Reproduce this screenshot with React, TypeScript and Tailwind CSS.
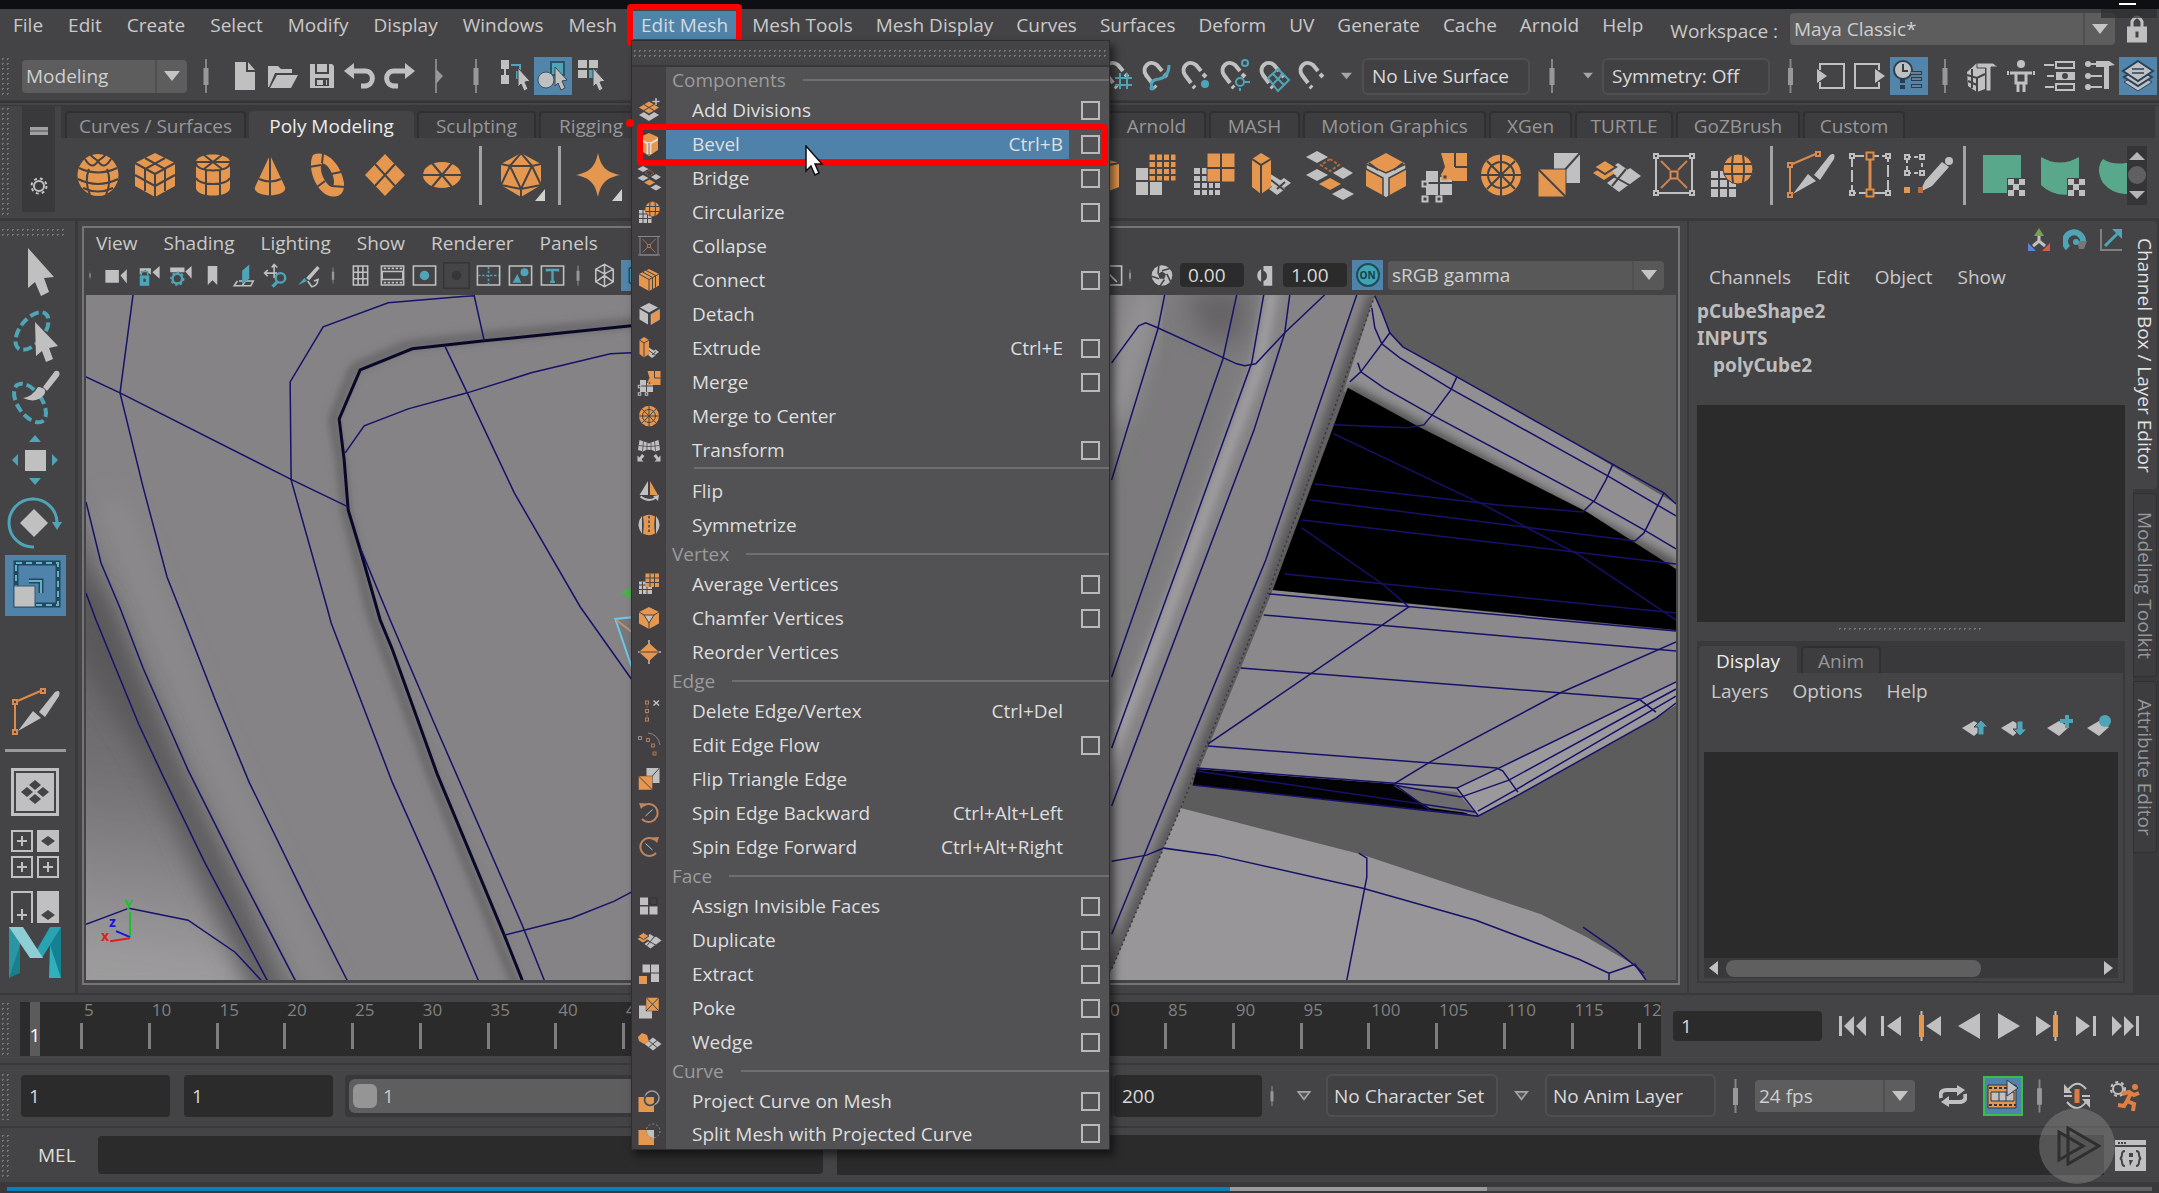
import React from "react";

const OR = "#e5974f";
const GR = "#c1c0c1";
const TE = "#4fa5b7";
const DK = "#444346";

type IconFn = () => React.ReactNode;

const dia = (cx: number, cy: number, w: number, h: number, fill: string, key?: string) => (
  <path key={key} d={`M${cx} ${cy - h}L${cx + w} ${cy}L${cx} ${cy + h}L${cx - w} ${cy}Z`} fill={fill} />
);
const dot = (x: number, y: number, c: string, s = 4) => (
  <rect x={x - s / 2} y={y - s / 2} width={s} height={s} fill={DK} stroke={c} strokeWidth="2" />
);

/* Poly modelling icons, drawn on a 44 x 44 grid */
const shapes: Record<string, IconFn> = {
  sphere: () => (
    <>
      <ellipse cx="22" cy="22" rx="20.500" ry="21" fill={OR} />
      <g fill="none" stroke={DK} strokeWidth="2">
        <path d="M3 15Q22 24 41 15M2 26Q22 36 42 26M7 35Q22 42 37 35" />
        <path d="M13 16Q8 28 14 42M31 16Q36 28 30 42M9 6Q16 18 22 8Q28 18 35 6M22 8Q16 4 14 1M22 8Q28 4 30 1" />
      </g>
    </>
  ),
  cube: () => (
    <>
      <path d="M22 0L42 10V33L22 44L2 33V10Z" fill={OR} />
      <path d="M2 10L22 21L42 10M22 21V44M12 5L32 16V38M32 5L12 16V38M2 22L22 33L42 22" fill="none" stroke={DK} strokeWidth="2" />
    </>
  ),
  cylinder: () => (
    <>
      <path d="M5 9C5 -1 39 -1 39 9V35C39 45 5 45 5 35Z" fill={OR} />
      <path d="M5 10C5 20 39 20 39 10M15 16V43M29 16V43M5 25C9 33 35 33 39 25M5 9H39M13 2L31 16M31 2L13 16" fill="none" stroke={DK} strokeWidth="2" />
    </>
  ),
  cone: () => (
    <>
      <path d="M22 2L37 34C40 45 4 45 7 34Z" fill={OR} />
      <path d="M22 2V43M11 26Q22 31 33 26" fill="none" stroke={DK} strokeWidth="2" />
    </>
  ),
  torus: () => (
    <>
      <path fillRule="evenodd" d="M8 2C20 -4 36 10 39 30C40 42 32 46 22 42C10 36 2 14 8 2ZM17 10C13 16 20 32 27 34C33 30 25 11 17 10Z" fill={OR} />
      <path d="M4 14L16 12M18 1L17 10M36 19L26 21M40 34L27 33M12 34L20 28" stroke={DK} strokeWidth="2" />
    </>
  ),
  plane: () => (
    <>
      {dia(22, 22, 20, 21, OR)}
      <path d="M12 11L32 33M32 11L12 33" stroke={DK} strokeWidth="2" />
    </>
  ),
  disc: () => (
    <>
      <ellipse cx="22" cy="22" rx="19" ry="13" fill={OR} />
      <path d="M3 22H41M12 10L32 34M32 10L12 34" stroke={DK} strokeWidth="2" />
    </>
  ),
  platonic: () => (
    <>
      <path d="M22 0L42 11V32L22 44L2 32V11Z" fill={OR} />
      <path d="M2 11L11 13L22 0L33 13L42 11M11 13H33L22 36L11 13L2 32L22 36L42 32L33 13M22 36V44" fill="none" stroke={DK} strokeWidth="2" />
    </>
  ),
  star: () => <path d="M22 0C25 14 30 19 44 22C30 25 25 30 22 44C19 30 14 25 0 22C14 19 19 14 22 0Z" fill={OR} />,
  halfcube: () => (
    <>
      <path d="M22 4L42 10V34L22 42Z" fill={OR} />
      <path d="M22 14L42 10M32 12V38" stroke={DK} strokeWidth="2" />
    </>
  ),
  smooth: () => (
    <>
      <path d="M2 15H28V42H2Z" fill={GR} />
      <path d="M2 28H28M15 15V42" stroke={DK} strokeWidth="2" />
      <path d="M15 1H42V28H15Z" fill={OR} stroke={DK} />
      <path d="M22 1V28M29 1V28M36 1V28M15 8H42M15 15H42M15 22H42" stroke={DK} strokeWidth="2" />
    </>
  ),
  reduce: () => (
    <>
      <path d="M2 15H28V42H2Z" fill={GR} />
      <path d="M9 15V42M16 15V42M22 15V42M2 22H28M2 29H28M2 36H28" stroke={DK} strokeWidth="2" />
      <path d="M15 0H43V29H15Z" fill={OR} stroke={DK} />
      <path d="M29 0V29M15 15H43" stroke={DK} strokeWidth="2" />
    </>
  ),
  extrude: () => (
    <>
      {dia(28, 36, 8, 6, GR)}
      {dia(35, 30, 7, 5, GR)}
      <path d="M20 20L36 30L26 36L18 30Z" fill={GR} />
      <path d="M22 27L35 37M28 36L36 29" stroke={DK} strokeWidth="2" />
      <path d="M12 0L22 6V34L12 41L3 34V6Z" fill={OR} />
      <path d="M3 6L12 12L22 6M12 12V41" fill="none" stroke={DK} strokeWidth="2" />
    </>
  ),
  bridge: () => (
    <>
      {dia(10, 4, 11, 6, GR)}
      {dia(10, 22, 11, 6, GR)}
      {dia(36, 20, 10, 6, GR)}
      {dia(23, 31, 11, 6, OR)}
      {dia(36, 41, 11, 6, GR)}
      <path d="M23 6L32 12L23 18L14 12Z" fill="none" stroke="#b5683f" strokeWidth="2" strokeDasharray="3 2" />
    </>
  ),
  bevel: () => (
    <>
      <path d="M22 0L42 11V33L22 44L2 33V11Z" fill={OR} />
      <path d="M2 11L22 20L42 11L42 16L25 25V43L22 45L19 43V25L2 16Z" fill={GR} stroke={DK} strokeWidth="1.500" />
      <path d="M5 10L14 17M39 10L30 17" stroke={DK} strokeWidth="2" />
    </>
  ),
  bevelEdge: () => (
    <>
      <path d="M22 0L40 8V34L22 46L4 34V8Z" fill={OR} />
      <path d="M4 10L18 18H26L40 10V15L27 22V42H17V22L4 15Z" fill="#e6d8cc" />
      <path d="M22 20V45" stroke="#8a7566" strokeWidth="2" />
    </>
  ),
  merge: () => (
    <>
      <path d="M4 18H18V24H30V42H4Z" fill={GR} />
      <path d="M17 18V42M4 30H30" stroke={DK} strokeWidth="2" />
      <path d="M19 0H45V28H31L19 22L23 14Z" fill={OR} />
      <path d="M33 0V14M33 14H45" stroke={DK} strokeWidth="2" />
      {dot(23, 24, OR, 5)}
      {dot(3, 31, GR, 5)}
      {dot(3, 46, GR, 5)}
      {dot(17, 46, GR, 5)}
    </>
  ),
  target: () => (
    <>
      <ellipse cx="22" cy="22" rx="20" ry="20.500" fill={OR} />
      <ellipse cx="22" cy="22" rx="13" ry="13" fill="none" stroke={DK} strokeWidth="2" />
      <path d="M22 1V43M2 22H42M8 8L36 36M36 8L8 36" stroke={DK} strokeWidth="2" />
    </>
  ),
  flipTri: () => (
    <>
      <path d="M17 0H43V30H17Z" fill={GR} />
      <path d="M43 0L17 29" stroke={DK} strokeWidth="2" />
      <path d="M1 16H29V44H1Z" fill={OR} stroke={DK} />
      <path d="M1 16L29 44" stroke={DK} strokeWidth="2" />
    </>
  ),
  duplicate: () => (
    <>
      {dia(25, 30, 12, 9, GR)}
      {dia(36, 23, 11, 8, GR)}
      {dia(24, 17, 10, 7, GR)}
      <path d="M19 23L37 33M32 16L18 33" stroke={DK} strokeWidth="2" />
      {dia(10, 20, 11, 7, OR)}
      <path d="M0 14L11 7L22 14L11 21Z" fill={OR} stroke={DK} strokeWidth="2" />
    </>
  ),
  collapse: () => (
    <>
      <path d="M4 3H40V40H4Z" fill="none" stroke={GR} strokeWidth="2" />
      <path d="M9 8L18 17M35 8L26 17M9 35L18 26M35 35L26 26" stroke="#c98350" strokeWidth="2" />
      {dot(22, 22, "#d98a4c", 7)}
      {dot(4, 3, GR)}
      {dot(40, 3, GR)}
      {dot(4, 40, GR)}
      {dot(40, 40, GR)}
    </>
  ),
  collapseDim: () => (
    <>
      <path d="M4 3H40V40H4Z" fill="none" stroke="#858486" strokeWidth="2" />
      <path d="M9 8L35 35M35 8L9 35" stroke="#9a7460" strokeWidth="2" />
      <path d="M0 3H44M0 40H44" stroke="#858486" strokeWidth="2" />
      {dot(22, 22, "#a97252", 6)}
    </>
  ),
  circularize: () => (
    <>
      <path d="M2 18H27V44H2Z" fill={GR} />
      <path d="M10 18V44M19 18V44M2 26H27M2 35H27" stroke={DK} strokeWidth="2" />
      <circle cx="29" cy="16" r="15" fill={OR} stroke={DK} />
      <path d="M24 2Q22 16 24 30M34 2Q36 16 34 30M15 11H43M15 21H43" fill="none" stroke={DK} strokeWidth="2" />
    </>
  ),
  knife: () => (
    <>
      <path d="M0 13V42M0 12L28 0" stroke="#d98a4c" strokeWidth="2" />
      <path d="M3 41L18 21L26 28Z" fill={GR} />
      <path d="M24 22L40 2Q46 -1 44 6L30 27Z" fill={GR} />
      {dot(0, 12, "#d98a4c")}
      {dot(28, 1, "#d98a4c")}
      {dot(0, 42, "#d98a4c")}
    </>
  ),
  loop: () => (
    <>
      <path d="M4 3H40V40H4Z" fill="none" stroke={GR} strokeWidth="2" strokeDasharray="12 3" />
      <path d="M22 3V40" stroke="#d98a4c" strokeWidth="3" />
      {dot(22, 3, "#e0893f", 7)}
      {dot(22, 40, "#e0893f", 7)}
      {dot(4, 3, GR)}
      {dot(40, 3, GR)}
      {dot(4, 40, GR)}
      {dot(40, 40, GR)}
    </>
  ),
  quad: () => (
    <>
      <path d="M1 4H16V20H1Z" fill="none" stroke={GR} strokeWidth="2" strokeDasharray="4 3" />
      {dot(1, 4, GR)}
      {dot(16, 4, GR)}
      {dot(1, 20, GR)}
      {dot(16, 20, GR)}
      <path d="M-2 34H4V40H-2Z" fill={OR} />
      <path d="M14 39L19 28L36 9L43 14L26 33Z" fill={GR} />
      <circle cx="43" cy="8" r="4" fill={GR} />
      <path d="M12 34H17V40H12Z" fill="#b76d3c" />
    </>
  ),
  uvFlat: () => (
    <>
      <path d="M-2 2H36V40H-2Z" fill="#5aa88c" />
      <Checker x={22} y={25} />
    </>
  ),
  uvCyl: () => (
    <>
      <path d="M-2 4Q17 15 36 4V40Q12 46 -2 32Z" fill="#5aa88c" />
      <Checker x={24} y={25} />
    </>
  ),
  uvSph: () => <path d="M2 6Q14 14 32 8V40Q14 44 2 30Q-6 16 2 6Z" fill="#5aa88c" />,
  divisions: () => (
    <>
      {dia(22, 32, 20, 12, GR)}
      {dia(22, 18, 23, 15, DK)}
      {dia(22, 17, 20, 12, OR)}
      <path d="M12 11L32 23M32 11L12 23" stroke={DK} strokeWidth="2" />
      <path d="M36 -2V12M29 5H43" stroke={GR} strokeWidth="3" />
    </>
  ),
  connect: () => (
    <>
      <path d="M22 0L42 10V33L22 44L2 33V10Z" fill={OR} />
      <path d="M2 10L22 21L42 10M22 21V44M9 6L29 17V40M16 3L35 13V37" fill="none" stroke={DK} strokeWidth="2" />
    </>
  ),
  detach: () => (
    <>
      <path d="M22 0L40 9L22 19L4 9Z" fill={GR} />
      <path d="M3 12L20 22V43L3 33Z" fill={GR} />
      <path d="M26 23L43 13V33L26 43Z" fill={OR} stroke={GR} />
    </>
  ),
  transform: () => (
    <>
      <path d="M3 2L18 7L22 9L26 7L41 2L44 22L34 25L26 21L22 22L18 21L10 25L0 22Z" fill={GR} />
      <path d="M11 4L9 24M33 4L35 24M18 7V21M26 7V21M2 13L18 15H26L42 13" fill="none" stroke={DK} strokeWidth="1.500" />
      <path d="M-1 45V33L3 37L8 30L13 34L7 41L11 45ZM45 45V33L41 37L36 30L31 34L37 41L33 45Z" fill={GR} />
    </>
  ),
  flip: () => (
    <>
      <path d="M20 2V30H3Z" fill={GR} />
      <path d="M24 2V30H40Z" fill={OR} />
      <path d="M5 33Q22 46 36 35" fill="none" stroke={GR} strokeWidth="4" />
      <path d="M30 32L42 30L40 42Z" fill={GR} />
    </>
  ),
  symmetrize: () => (
    <>
      <path d="M8 4Q-6 20 8 40ZM36 4Q50 20 36 40Z" fill={GR} />
      <path d="M10 5Q22 -2 34 5Q31 20 34 39Q22 46 10 39Q13 20 10 5Z" fill={OR} />
      <path d="M22 4V40" stroke={DK} strokeWidth="3" strokeDasharray="5 4" />
    </>
  ),
  average: () => (
    <>
      <path d="M2 17H28V42H2Z" fill={GR} />
      <path d="M9 17V42M18 17V42M2 24H28M2 33H28" stroke={DK} strokeWidth="2" />
      <path d="M15 1H42V28H15Z" fill={OR} />
      <path d="M24 1V28M33 1V28M15 10H42M15 19H42" stroke={DK} strokeWidth="2" />
    </>
  ),
  chamfer: () => (
    <>
      <path d="M22 0L42 10V33L22 44L2 33V10Z" fill={OR} />
      <path d="M12 16H32L22 32Z" fill={GR} stroke={DK} strokeWidth="2" />
      <path d="M2 10L12 16M42 10L32 16M22 32V44" stroke={DK} strokeWidth="2" />
    </>
  ),
  reorder: () => (
    <>
      <path d="M22 -2V46M0 22H46" stroke={GR} strokeWidth="3" />
      {dia(22, 22, 20, 18, OR)}
      <path d="M2 22H42" stroke={DK} strokeWidth="2" />
    </>
  ),
  deleteEdge: () => (
    <>
      <path d="M18 6V38" stroke="#a9714e" strokeWidth="2" strokeDasharray="3 3" />
      {dot(18, 5, "#b78160", 6)}
      {dot(18, 22, "#b78160", 6)}
      {dot(18, 39, "#b78160", 6)}
      <path d="M31 1L42 11M42 1L31 11" stroke={GR} strokeWidth="3" />
    </>
  ),
  edgeFlow: () => (
    <>
      <path d="M20 -2Q40 0 44 22" fill="none" stroke="#858486" strokeWidth="2" />
      {dot(4, 8, "#8d8d8d", 6)}
      {dot(20, 12, "#b07a56", 6)}
      {dot(30, 23, "#b07a56", 6)}
      {dot(33, 39, "#b07a56", 6)}
    </>
  ),
  spinBack: () => (
    <>
      <path d="M10 8A18 18 0 1 1 8 34" fill="none" stroke="#c08560" strokeWidth="4" />
      <path d="M2 2L16 3L6 14Z" fill="#c08560" />
      <path d="M15 28L29 15" stroke={GR} strokeWidth="2" />
    </>
  ),
  spinFwd: () => (
    <>
      <path d="M34 8A18 18 0 1 0 36 34" fill="none" stroke="#c08560" strokeWidth="4" />
      <path d="M42 2L28 3L38 14Z" fill="#c08560" />
      <path d="M29 28L15 15" stroke={GR} strokeWidth="2" />
    </>
  ),
  invisible: () => (
    <>
      <path d="M4 5H20V20H4ZM4 23H20V39H4ZM23 23H39V39H23Z" fill={GR} />
      <path d="M24 6H38V19H24Z" fill="none" stroke="#333" strokeWidth="2" />
    </>
  ),
  extract: () => (
    <>
      <path d="M9 3H24V19H9ZM26 3H42V19H26ZM26 21H42V38H26Z" fill={GR} />
      <path d="M2 26H18V42H2Z" fill={OR} />
    </>
  ),
  poke: () => (
    <>
      <path d="M2 17H28V43H2Z" fill={GR} />
      <path d="M16 1H42V28H16Z" fill={OR} stroke={DK} />
      <path d="M16 1L42 28M42 1L16 28" stroke={DK} strokeWidth="2" />
    </>
  ),
  wedge: () => (
    <>
      {dia(30, 26, 17, 13, GR)}
      <path d="M21 19L38 33M38 19L21 33" stroke={DK} strokeWidth="2" />
      <path d="M0 12L8 4L18 8L22 22L12 26L2 20Z" fill={OR} />
    </>
  ),
  project: () => (
    <>
      <path d="M1 14H32V44H1Z" fill={OR} />
      <circle cx="28" cy="16" r="14" fill="none" stroke="#9d9c9e" strokeWidth="3" />
      <circle cx="24" cy="20" r="11" fill="none" stroke={DK} strokeWidth="3" />
    </>
  ),
  splitMesh: () => (
    <>
      <path d="M1 14H32V44H1Z" fill={OR} />
      <path d="M18 14H32V30Q18 28 18 14Z" fill={GR} />
      <circle cx="30" cy="16" r="14" fill="none" stroke="#8d8c8e" strokeWidth="2" strokeDasharray="4 4" />
    </>
  ),
};

function Checker({ x, y }: { x: number; y: number }) {
  return (
    <g>
      <rect x={x} y={y} width="18" height="18" fill={DK} />
      <path
        d={`M${x + 1} ${y + 1}h6v6h-6zM${x + 12} ${y + 1}h6v6h-6zM${x + 6} ${y + 6}h6v6h-6zM${x + 1} ${y + 12}h6v6h-6zM${x + 12} ${y + 12}h6v6h-6z`}
        fill={GR}
      />
    </g>
  );
}

function Shape({ name, className = "size-11" }: { name: string; className?: string }) {
  return (
    <svg viewBox="0 0 44 44" className={`${className} overflow-visible shrink-0`} aria-hidden="true">
      {shapes[name]()}
    </svg>
  );
}

/* Toolbar icons, drawn on a 34 x 34 grid */
const magnet = (
  <>
    <path d="M13 24L7 16C2 8 11 0 18 6L23 12" fill="none" stroke={GR} strokeWidth="4" />
    <path d="M15 27L17 29M25 15L28 18" stroke={GR} strokeWidth="4" />
  </>
);
const frame = <path d="M3 5H31V29H3Z" fill="none" stroke={GR} strokeWidth="2" />;
const cursor = (x: number, y: number) => (
  <path d={`M${x} ${y}l12 13l-5 1l3 7l-4 2l-3 -7l-3 3z`} fill={GR} stroke={DK} strokeWidth="1" />
);
const tools: Record<string, IconFn> = {
  sep: () => (
    <>
      <path d="M17 0V34" stroke="#858586" strokeWidth="2" />
      <path d="M17 9V26" stroke="#98989a" strokeWidth="5" />
    </>
  ),
  playSep: () => (
    <>
      <path d="M15 0V34" stroke="#858586" strokeWidth="2" />
      <path d="M15 10L22 17L15 25Z" fill="#98989a" />
    </>
  ),
  file: () => <path d="M7 3H18V13H27V31H7ZM20 3L27 11H20Z" fill={GR} />,
  open: () => (
    <>
      <path d="M2 28V7H12L15 10H26V14H9L3 28Z" fill={GR} />
      <path d="M11 16H32L25 29H4Z" fill={GR} />
    </>
  ),
  save: () => (
    <>
      <path d="M5 5H27L29 7V29H5Z" fill={GR} />
      <path d="M10 5H24V15H10Z" fill={DK} />
      <path d="M12 5H22V13H12ZM10 20H24V29H10Z" fill={GR} />
      <path d="M10 19H24V27H10Z" fill={DK} />
      <path d="M12 21H22V26H12Z" fill={GR} />
      <path d="M18 21H21V26H18Z" fill={DK} />
    </>
  ),
  undo: () => (
    <>
      <path d="M7 12H22C32 12 32 27 21 27H18" fill="none" stroke={GR} strokeWidth="5" />
      <path d="M1 12L11 4V20Z" fill={GR} />
    </>
  ),
  redo: () => (
    <>
      <path d="M27 12H12C2 12 2 27 13 27H16" fill="none" stroke={GR} strokeWidth="5" />
      <path d="M33 12L23 4V20Z" fill={GR} />
    </>
  ),
  selHier: () => (
    <>
      <path d="M3 1H11V10H3ZM3 16H11V25H3Z" fill={GR} />
      <path d="M7 10V16" stroke={GR} strokeWidth="2" />
      <path d="M13 6H22V14" fill="none" stroke={TE} strokeWidth="2" />
      <path d="M18 12H24V20H18Z" fill={TE} />
      {cursor(20, 9)}
    </>
  ),
  selObj: () => (
    <>
      <path d="M15 3H28V16H15Z" fill={TE} stroke="#27566a" strokeWidth="2" />
      <circle cx="10" cy="21" r="8" fill={GR} stroke="#2f5470" />
      {cursor(19, 8)}
    </>
  ),
  selComp: () => (
    <>
      <path d="M3 1H12V9H3ZM14 1H23V9H14ZM3 11H12V19H3Z" fill={GR} />
      <path d="M14 11H22V19H14Z" fill={TE} />
      {cursor(18, 9)}
    </>
  ),
  magGrid: () => (
    <>
      {magnet}
      <path d="M20 14V30M27 14V30M15 19H32M15 26H32" stroke={TE} strokeWidth="2" />
    </>
  ),
  magCurve: () => (
    <>
      {magnet}
      <path d="M13 29Q10 21 20 20Q30 18 30 6" fill="none" stroke={TE} strokeWidth="3" />
      <circle cx="13" cy="29" r="2.500" fill={TE} />
    </>
  ),
  magPoint: () => (
    <>
      {magnet}
      <circle cx="27" cy="25" r="4" fill={TE} />
    </>
  ),
  magCenter: () => (
    <>
      {magnet}
      <circle cx="28" cy="4" r="3" fill="none" stroke={TE} strokeWidth="2" />
      <circle cx="23" cy="23" r="4" fill="none" stroke={TE} strokeWidth="2" />
      <path d="M28 23H33M23 29V32" stroke={TE} strokeWidth="2" />
    </>
  ),
  magPlane: () => (
    <>
      {magnet}
      <path d="M12 19L22 10L33 21L22 32ZM17 15L28 26M27 15L17 25" fill="none" stroke={TE} strokeWidth="2" />
    </>
  ),
  magnet: () => magnet,
  inputs: () => (
    <>
      <path d="M6 11V5H30V29H6V23" fill="none" stroke={GR} strokeWidth="2" />
      <path d="M3 10L13 17L3 24Z" fill={GR} />
    </>
  ),
  outputs: () => (
    <>
      <path d="M26 11V5H2V29H26V23" fill="none" stroke={GR} strokeWidth="2" />
      <path d="M22 10L32 17L22 24Z" fill={GR} />
    </>
  ),
  history: () => (
    <>
      <circle cx="11" cy="11" r="9" fill={GR} stroke="#2e3f50" strokeWidth="2" />
      <path d="M11 5V12H16" fill="none" stroke="#2e3f50" strokeWidth="2" />
      <path d="M19 14H30M19 20H30M19 27H30M8 22H13M8 28H13" stroke="#263d52" strokeWidth="4" />
      <path d="M19 14H29M20 20H29M20 27H29" stroke={GR} strokeWidth="1" />
    </>
  ),
  modelKit: () => (
    <>
      <path d="M2 13L12 4H20V30L12 33L3 27Z" fill={GR} />
      <path d="M2 16L12 19L20 15M12 19V33M3 22L12 26M7 10V29" fill="none" stroke={DK} strokeWidth="2" />
      <path d="M12 4H28L33 8H26V32H21V9H12Z" fill={GR} stroke={DK} />
    </>
  ),
  man: () => (
    <>
      <circle cx="17" cy="5" r="4" fill={GR} />
      <path d="M6 14H28M12 14H22V24H12ZM14 24V33M20 24V33" fill="none" stroke={GR} strokeWidth="3" />
      <path d="M3 14H5M29 14H31" stroke={GR} strokeWidth="4" />
    </>
  ),
  attrs: () => (
    <>
      <path d="M1 6H11M4 17H11M2 28H11" stroke={GR} strokeWidth="2" />
      <path d="M13 3H31V9H13ZM13 25H31V31H13Z" fill="none" stroke={GR} strokeWidth="2" />
      <path d="M13 13H32V21H13Z" fill={GR} />
      <circle cx="22" cy="17" r="3" fill={DK} />
    </>
  ),
  toolSet: () => (
    <>
      <circle cx="6" cy="5" r="3" fill={GR} />
      <circle cx="6" cy="17" r="3" fill={GR} />
      <circle cx="6" cy="28" r="3" fill={GR} />
      <path d="M9 5H15M9 17H20M9 28H20" stroke={GR} strokeWidth="2" />
      <path d="M14 2H27L33 6L27 7V30H22V8H14Z" fill={GR} />
    </>
  ),
  layers: () => (
    <>
      <path d="M17 15L31 23L17 32L3 23Z" fill={GR} stroke="#28435b" />
      <path d="M17 10L31 18L17 27L3 18Z" fill={GR} stroke="#28435b" strokeWidth="2" />
      <path d="M17 2L32 12L17 22L2 12Z" fill={GR} stroke="#28435b" strokeWidth="2" />
      <path d="M11 10H23M11 14H23" stroke="#28435b" strokeWidth="1.500" />
    </>
  ),
  camera: () => <path d="M3 10H20V26H3ZM22 17L30 9V27Z" fill={GR} />,
  camLock: () => (
    <>
      <path d="M6 8H20V16L13 10L6 16ZM22 13L31 5V21Z" fill={GR} />
      <path d="M6 17H18V30H6Z" fill={TE} />
      <path d="M8 17V12H16V17" fill="none" stroke={TE} strokeWidth="2" />
      <path d="M12 21V25" stroke={DK} strokeWidth="3" />
    </>
  ),
  camGear: () => (
    <>
      <path d="M4 7H22V13H4ZM23 12L31 5V21Z" fill={GR} />
      <circle cx="13" cy="21" r="6" fill="none" stroke={TE} strokeWidth="3" />
      <circle cx="13" cy="21" r="8" fill="none" stroke={TE} strokeWidth="2" strokeDasharray="3 3" />
    </>
  ),
  bookmark: () => <path d="M11 5H23V29L17 23L11 29Z" fill={GR} />,
  imagePlane: () => (
    <>
      <path d="M10 24H28L25 30H4L8 24M14 30L18 24" fill="none" stroke={GR} strokeWidth="2" />
      <path d="M14 11L23 3V21L14 28Z" fill={TE} />
    </>
  ),
  panZoom: () => (
    <>
      <path d="M3 14H18M14 4V20M11 7L14 3L18 7M6 10L2 14L6 18" fill="none" stroke={GR} strokeWidth="2" />
      <circle cx="22" cy="20" r="6" fill="none" stroke={TE} strokeWidth="3" />
      <path d="M18 25L12 31" stroke={TE} strokeWidth="4" />
    </>
  ),
  grease: () => (
    <>
      <path d="M14 20L28 5L31 8L18 23Z" fill={GR} />
      <path d="M4 29L12 20L15 24Z" fill={TE} />
      <path d="M16 24L21 31Q28 31 29 22L24 24" fill="none" stroke={GR} strokeWidth="2" />
    </>
  ),
  grid: () => <path d="M8 5H26V29H8ZM14 5V29M20 5V29M8 13H26M8 21H26" fill="none" stroke={GR} strokeWidth="2" />,
  film: () => (
    <>
      {frame}
      <path d="M6 8H29M6 26H29" stroke={GR} strokeWidth="2" strokeDasharray="3 2" />
      <path d="M4 12H30V22H4Z" fill="none" stroke={GR} strokeWidth="2" />
    </>
  ),
  gateRes: () => (
    <>
      {frame}
      <circle cx="17" cy="17" r="6" fill={TE} />
    </>
  ),
  gateMask: () => (
    <>
      <path d="M1 1H33V33H1Z" fill="#454547" stroke="#353537" strokeWidth="2" />
      <circle cx="17" cy="17" r="6" fill="#363638" />
    </>
  ),
  chart: () => (
    <>
      {frame}
      <path d="M17 6V28M4 17H30" stroke={TE} strokeWidth="2" strokeDasharray="3 2" />
    </>
  ),
  safe: () => (
    <>
      {frame}
      <circle cx="22" cy="13" r="5" fill={TE} />
      <path d="M7 26L13 15L18 26Z" fill={TE} />
    </>
  ),
  titleSafe: () => (
    <>
      {frame}
      <path d="M10 12V10H24V12M17 10V25M14 25H20" fill="none" stroke={TE} strokeWidth="3" />
    </>
  ),
  wire: () => <path d="M17 3L28 9V25L17 31L6 25V9ZM6 9L17 15L28 9M17 15V31M17 3V15M6 25L17 17L28 25" fill="none" stroke={GR} strokeWidth="2" />,
  shaded: () => <path d="M8 8Q17 2 27 8V26Q17 32 8 26Z" fill={TE} stroke="#1f4a5c" strokeWidth="2" />,
  xray: () => (
    <>
      {frame}
      <path d="M10 10L25 25" stroke={GR} strokeWidth="2" />
    </>
  ),
  aperture: () => (
    <>
      <circle cx="17" cy="17" r="13" fill={GR} />
      <path d="M17 12L22 15L20 21H14L12 15Z" fill={DK} />
      <path d="M17 11L28 8M23 15L28 25M20 22L14 31M13 21L4 18M12 15L13 4" stroke={DK} strokeWidth="2" />
    </>
  ),
  contrast: () => (
    <>
      <path d="M17 5H28V30H17V24A7 7 0 0 0 17 11Z" fill={GR} />
      <path d="M14 9A9 9 0 0 0 14 25Z" fill={GR} />
    </>
  ),
  caret: () => <path d="M11 13H23L17 20Z" fill="#a5a5a6" />,
  caretOutline: () => <path d="M10 12H24L17 21Z" fill="#555557" stroke="#a5a5a6" strokeWidth="2" />,
};

function Tool({ name, className = "size-[34px]" }: { name: string; className?: string }) {
  return (
    <svg viewBox="0 0 34 34" className={`${className} overflow-visible shrink-0`} aria-hidden="true">
      {tools[name]()}
    </svg>
  );
}

function ToolButton({ name, active = false, size = "size-[34px]" }: { name: string; active?: boolean; size?: string }) {
  return (
    <button aria-label={name} className={`flex items-center justify-center justify-self-center p-[2px] ${active ? "bg-[#5285a9]" : ""}`}>
      <Tool name={name} className={size} />
    </button>
  );
}

const grip = "bg-[radial-gradient(#77777a_1px,transparent_1px)] bg-[length:5px_5px]";

function Combo({ label, value, className, bg = "bg-[#5d5d5e]" }: { label: string; value: string; className: string; bg?: string }) {
  return (
    <div className={`relative rounded-sm ${bg} ${className}`}>
      <select aria-label={label} className="size-full appearance-none bg-transparent pl-1 text-[#cfcfcf]">
        <option>{value}</option>
      </select>
      <span className="pointer-events-none absolute inset-y-0 right-0 flex w-8 items-center justify-center border-l-2 border-[#505051]">
        <svg viewBox="0 0 16 10" className="h-2.5 w-4" aria-hidden="true">
          <path d="M0 0H16L8 10Z" fill="#c4c4c4" />
        </svg>
      </span>
    </div>
  );
}

const commonMenus = ["File", "Edit", "Create", "Select", "Modify", "Display", "Windows", "Mesh"];
const modelingMenus = ["Mesh Tools", "Mesh Display", "Curves", "Surfaces", "Deform", "UV", "Generate", "Cache", "Arnold", "Help"];

function MenuBar() {
  return (
    <header className="flex h-10 shrink-0 items-center bg-[#444446]">
      <nav className="flex pb-2 pl-[13px]">
        <div className="flex gap-[25px]">
          {commonMenus.map((m) => (
            <button key={m}>{m}</button>
          ))}
        </div>
        <button className="relative mr-4 ml-4 bg-[#5083aa] px-2 text-[#d5d9de]">
          Edit Mesh
          <span className="absolute -inset-x-[6px] -inset-y-[7px] rounded border-[6px] border-[#ff0000]" />
        </button>
        <div className="flex gap-[23px]">
          {modelingMenus.map((m) => (
            <button key={m}>{m}</button>
          ))}
        </div>
      </nav>
      <div className="ml-auto flex items-center gap-3 pr-3">
        <span className="pt-1">Workspace :</span>
        <Combo label="Workspace" value="Maya Classic*" className="h-8 w-[325px]" />
        <svg viewBox="0 0 20 27" className="h-7 w-5" role="img" aria-label="Lock">
          <path d="M5 12V6Q10 -3 15 6V12" fill="none" stroke={GR} strokeWidth="3" />
          <path d="M0 11H20V27H0Z" fill={GR} />
          <path d="M10 16V22" stroke={DK} strokeWidth="3" />
        </svg>
      </div>
    </header>
  );
}

function StatusLine() {
  return (
    <div className="flex h-[51px] shrink-0 items-center bg-[#444446] pt-[3px]">
      <span className={`h-10 w-2.5 ${grip}`} />
      <Combo label="Menu set" value="Modeling" className="ml-3 h-[33px] w-[165px]" />
      <div className="grid w-[424px] grid-cols-11 items-center">
        {["sep", "file", "open", "save", "undo", "redo", "playSep", "sep", "selHier", "selObj", "selComp"].map((n, i) => (
          <ToolButton key={i} name={n} active={n === "selObj"} />
        ))}
      </div>
      <div className="ml-[486px] grid w-[234px] grid-cols-6 items-center">
        {["magGrid", "magCurve", "magPoint", "magCenter", "magPlane", "magnet"].map((n) => (
          <ToolButton key={n} name={n} />
        ))}
      </div>
      <Tool name="caret" className="w-[31px]" />
      <button className="h-[37px] w-[168px] rounded-md border-2 border-[#4f4f51] bg-[#414143] pl-2 text-left text-[#dadada]">No Live Surface</button>
      <Tool name="sep" className="h-[34px] w-11" />
      <Tool name="caret" className="w-[28px]" />
      <button className="h-[37px] w-[168px] rounded-md border-2 border-[#4f4f51] bg-[#414143] pl-2 text-left text-[#dadada]">Symmetry: Off</button>
      <Tool name="sep" className="h-[34px] w-[41px]" />
      <div className="grid w-[117px] grid-cols-3 items-center">
        <ToolButton name="inputs" />
        <ToolButton name="outputs" />
        <ToolButton name="history" active />
      </div>
      <Tool name="sep" className="h-[34px] w-[34px]" />
      <div className="grid w-[195px] grid-cols-5 items-center">
        {["modelKit", "man", "attrs", "toolSet", "layers"].map((n) => (
          <ToolButton key={n} name={n} active={n === "layers"} />
        ))}
      </div>
    </div>
  );
}

function ShelfTab({ label, active = false, className = "" }: { label: string; active?: boolean; className?: string }) {
  return (
    <button
      role="tab"
      aria-selected={active}
      className={`h-[27px] rounded-t border-x-2 border-t-2 text-center leading-6 whitespace-nowrap ${
        active ? "border-transparent bg-[#444446] text-[#ececec]" : "border-[#303032] bg-[#3d3d3f] text-[#979798]"
      } ${className}`}
    >
      {label}
    </button>
  );
}

function ShelfGroup({ names, className }: { names: string[]; className: string }) {
  return (
    <div className={`grid shrink-0 items-center justify-items-center ${className}`}>
      {names.map((n) => (
        <button key={n} aria-label={n}>
          <Shape name={n} />
        </button>
      ))}
    </div>
  );
}

const shelfRule = <span className="h-[59px] w-[3px] shrink-0 bg-[#a3a3a4]" />;
const corner = (
  <svg viewBox="0 0 10 12" className="absolute -right-0.5 -bottom-1 h-3 w-2.5" aria-hidden="true">
    <path d="M10 0V12H0Z" fill="#d0d0d0" />
  </svg>
);

function Shelf() {
  return (
    <div className="flex h-[112px] shrink-0 bg-[#444446]">
      <span className={`w-2.5 ${grip}`} />
      <div className="ml-3 flex h-[106px] w-[33px] flex-col items-center justify-between bg-[#39383a] pt-[21px] pb-[17px]">
        <span className="h-2 w-[18px] border-y-[3px] border-[#a0a0a0] bg-[#77777a]" />
        <svg viewBox="0 0 18 18" className="size-[18px]" aria-hidden="true">
          <circle cx="9" cy="9" r="5" fill="none" stroke={GR} strokeWidth="2" />
          <circle cx="9" cy="9" r="7.500" fill="none" stroke={GR} strokeWidth="2" strokeDasharray="3 3" />
        </svg>
      </div>
      <div className="flex min-w-0 flex-1 flex-col pl-1.5">
        <div role="tablist" className="mr-1 flex h-[32px] items-end gap-[3px] bg-[#39383a] pl-1">
          <ShelfTab label="Curves / Surfaces" className="w-[181px]" />
          <ShelfTab label="Poly Modeling" active className="w-[165px]" />
          <ShelfTab label="Sculpting" className="w-[119px]" />
          <ShelfTab label="Rigging" className="w-[104px]" />
          <ShelfTab label="Arnold" className="ml-[461px] w-[99px]" />
          <ShelfTab label="MASH" className="w-[91px]" />
          <ShelfTab label="Motion Graphics" className="w-[183px]" />
          <ShelfTab label="XGen" className="w-[83px]" />
          <ShelfTab label="TURTLE" className="w-[98px]" />
          <ShelfTab label="GoZBrush" className="w-[124px]" />
          <ShelfTab label="Custom" className="w-[102px]" />
        </div>
        <div className="flex h-[74px] items-center pl-2">
          <ShelfGroup names={["sphere", "cube", "cylinder", "cone", "torus", "plane", "disc"]} className="w-[402px] grid-cols-7" />
          <span className="w-[8px]" />
          {shelfRule}
          <button aria-label="platonic" className="relative ml-[17px]">
            <Shape name="platonic" />
            {corner}
          </button>
          <span className="w-[15px]" />
          {shelfRule}
          <button aria-label="star" className="relative ml-[15px]">
            <Shape name="star" />
            {corner}
          </button>
          <ShelfGroup
            names={["halfcube", "smooth", "reduce", "extrude", "bridge", "bevel", "merge", "target", "flipTri", "duplicate", "collapse", "circularize"]}
            className="ml-[450px] w-[690px] grid-cols-12"
          />
          <span className="w-[10px]" />
          {shelfRule}
          <ShelfGroup names={["knife", "loop", "quad"]} className="ml-2.5 w-[174px] grid-cols-3" />
          <span className="w-[6px]" />
          {shelfRule}
          <div className="ml-[15px] flex w-[146px] gap-[14px] overflow-hidden pl-1">
            <Shape name="uvFlat" />
            <Shape name="uvCyl" />
            <Shape name="uvSph" />
          </div>
          <div className="z-10 flex h-[59px] w-5 shrink-0 flex-col items-center justify-between bg-[#353436] py-1.5">
            <svg viewBox="0 0 16 8" className="h-2 w-4"><path d="M0 8H16L8 0Z" fill="#b5b5b5" /></svg>
            <span className="size-[18px] rounded-full bg-[#606062]" />
            <svg viewBox="0 0 16 8" className="h-2 w-4"><path d="M0 0H16L8 8Z" fill="#b5b5b5" /></svg>
          </div>
        </div>
      </div>
    </div>
  );
}

function ToolBox() {
  return (
    <aside className="flex w-[75px] shrink-0 flex-col bg-[#444446] pt-1.5">
      <span className={`h-2.5 w-16 ${grip}`} />
      <div className="flex w-[70px] flex-col items-center">
        <button aria-label="Select tool" className="mt-[7px]">
          <svg viewBox="0 0 50 56" className="h-14 w-[50px]">
            <path d="M18 4L44 33L34 34L39 48L31 52L25 38L18 44Z" fill={GR} />
          </svg>
        </button>
        <button aria-label="Lasso tool" className="mt-2">
          <svg viewBox="0 0 50 56" className="h-14 w-[50px]">
            <ellipse cx="22" cy="23" rx="12" ry="22" transform="rotate(38 22 23)" fill="none" stroke={TE} strokeWidth="4" strokeDasharray="9 4" />
            <path d="M25 14L48 38L39 40L43 51L36 54L32 43L26 48Z" fill={GR} />
          </svg>
        </button>
        <button aria-label="Paint selection tool" className="mt-1.5">
          <svg viewBox="0 0 50 56" className="h-14 w-[50px]">
            <ellipse cx="20" cy="33" rx="12" ry="22" transform="rotate(-35 20 33)" fill="none" stroke={TE} strokeWidth="4" strokeDasharray="9 4" />
            <path d="M33 17L45 1Q51 0 49 6L37 21Z" fill={GR} />
            <path d="M28 17Q38 18 34 25Q26 34 13 28Q22 27 28 17Z" fill={GR} />
          </svg>
        </button>
        <button aria-label="Move tool" className="mt-1.5">
          <svg viewBox="0 0 50 56" className="h-14 w-[50px]">
            <path d="M15 18H36V39H15Z" fill={GR} />
            <path d="M19 10H31L25 3ZM19 46H31L25 53ZM8 22V34L2 28ZM42 22V34L48 28Z" fill={TE} />
          </svg>
        </button>
        <button aria-label="Rotate tool" className="mt-[7px]">
          <svg viewBox="0 0 50 56" className="h-14 w-[50px] overflow-visible">
            <path d="M24 52A24 24 0 1 1 47 27" fill="none" stroke={TE} strokeWidth="3" />
            <path d="M42 27H52L47 35Z" fill={TE} />
            {dia(24, 28, 14, 14, GR)}
          </svg>
        </button>
        <button aria-label="Scale tool" className="mt-1 bg-[#5083aa]">
          <svg viewBox="0 0 61 61" className="size-[61px]">
            <path d="M11 8H53V50H11Z" fill="none" stroke="#23465f" strokeWidth="5" />
            <path d="M11 8H53V50H11Z" fill="none" stroke="#5eb3c4" strokeWidth="2" strokeDasharray="6 4" />
            <path d="M24 26H36V38" fill="none" stroke="#23465f" strokeWidth="5" />
            <path d="M24 26H36V38" fill="none" stroke="#5eb3c4" strokeWidth="2" />
            <path d="M9 31H30V52H9Z" fill={GR} stroke="#35586f" />
          </svg>
        </button>
        <button aria-label="Multi-cut" className="mt-[74px] ml-[4px]">
          <Shape name="knife" />
        </button>
        <span className="mt-[15px] h-[3px] w-[61px] bg-[#999]" />
        <button aria-label="Single pane" className="mt-4">
          <svg viewBox="0 0 48 48" className="size-12">
            <path d="M0 0H48V48H0Z" fill={GR} />
            <path d="M4 4H44V44H4Z" fill="none" stroke={DK} strokeWidth="2" />
            {dia(24, 17, 6, 5, DK)}
            {dia(24, 31, 6, 5, DK)}
            {dia(16, 24, 6, 5, DK)}
            {dia(32, 24, 6, 5, DK)}
          </svg>
        </button>
        <button aria-label="Four panes" className="mt-[14px]">
          <svg viewBox="0 0 48 48" className="size-12">
            <path d="M1 1H21V21H1ZM1 27H21V47H1ZM27 27H47V47H27ZM11 6V16M6 11H16M11 32V42M6 37H16M37 32V42M32 37H42" fill="none" stroke={GR} strokeWidth="2" />
            <path d="M26 0H48V22H26Z" fill={GR} />
            {dia(37, 11, 7, 5, DK)}
          </svg>
        </button>
        <button aria-label="Two panes" className="mt-[13px] h-8 overflow-hidden">
          <svg viewBox="0 0 48 32" className="h-8 w-12">
            <path d="M1 34V1H21V34M11 18V29M6 24H16" fill="none" stroke={GR} strokeWidth="2" />
            <path d="M26 0H48V32H26Z" fill={GR} />
            {dia(37, 24, 7, 5, DK)}
          </svg>
        </button>
        <svg viewBox="0 0 54 51" className="mt-1 h-[51px] w-[54px]" role="img" aria-label="Maya">
          <path d="M1 0H12V42L1 51Z" fill="#2b95a3" />
          <path d="M42 0H53V51L42 44Z" fill="#15808f" />
          <path d="M42 0H53L34 31H24Z" fill="#27a3b2" />
          <path d="M1 0H15L35 31H22Z" fill="#8fcdd4" />
          <path d="M12 18V46L1 51Z" fill="#1a7f8d" />
          <path d="M42 18L53 51H41Z" fill="#2fb0be" />
        </svg>
      </div>
    </aside>
  );
}

/* Polylines of the wireframe drawn over the shaded surfaces */
const wires = [
  "133,295 120,393 143,487 167,577 184,620 216,702 249,782 306,899 347,980",
  "86,377 120,393 292,480 348,507",
  "86,502 101,563 120,608 143,668 188,770 241,876 295,980",
  "86,593 96,620 139,725 163,776 204,861 267,980",
  "484,341 474,296 459,297 388,303 323,327 290,382 291,480 327,608 331,623 392,782 433,874 478,980",
  "631,353 610,354 531,373 467,393 408,409 364,426 345,453",
  "445,347 467,393 514,493 580,607 631,679",
  "361,550 390,620 433,721 522,925 544,980",
  "504,935 571,918 614,901 631,892",
  "86,924 129,908 188,920 235,952 261,980",
  "1164,295 1157,330 1111,480",
  "1236,295 1222,360 1111,677",
  "1263,295 1251,363 1188,537 1111,748",
  "1289,295 1284,333 1253,431 1111,806",
  "1356,295 1265,560 1111,934",
  "1111,363 1138,326 1145,323 1157,328 1236,364 1244,366 1255,364 1284,333 1324,295",
  "1111,861 1146,855 1163,848 1215,855 1362,888 1475,920 1578,959 1608,973 1608,980",
  "1374,296 1381,312 1389,333 1402,347 1456,377 1611,464 1663,493 1675,504",
  "1371,308 1374,328 1381,344 1399,358 1450,389 1605,475 1675,516",
  "1357,363 1360,372 1383,388 1429,414 1590,500 1643,530 1675,549",
  "1389,333 1381,344 1360,372 1349,382",
  "1456,377 1450,390 1433,413 1423,425 1406,428 1333,425",
  "1612,464 1605,480 1594,500 1582,512 1498,505 1314,484",
  "1663,493 1657,505 1643,533 1634,541 1309,500",
  "1301,520 1675,564",
  "1333,434 1483,505 1578,555 1675,620",
  "1284,574 1675,613",
  "1301,528 1383,585 1408,607 1383,624 1207,744",
  "1268,594 1675,631",
  "1263,615 1675,651",
  "1240,668 1638,699 1655,712",
  "1207,746 1496,768 1502,771 1517,792",
  "1196,768 1456,788 1477,815",
  "1456,788 1498,768 1675,682",
  "1460,797 1508,780 1675,689",
  "1477,811 1516,789 1675,696",
  "1192,785 1477,816 1519,794 1655,718 1675,703",
  "1675,642 1559,693 1429,762 1393,784 1429,810",
  "1196,771 1475,812",
  "1393,785 1460,797",
  "1608,973 1634,964 1645,980",
  "1358,853 1366,858 1366,877 1346,980",
  "1582,927 1615,950 1643,973",
];

function Viewport() {
  return (
    <svg viewBox="86 295 1589 685" preserveAspectRatio="xMidYMid slice" className="h-0 min-h-0 w-full flex-[1_1_0px] bg-[#5c5c5c]" role="img" aria-label="Perspective view">
      <defs>
        <filter id="soft" x="-30%" y="-30%" width="160%" height="160%">
          <feGaussianBlur stdDeviation="12" />
        </filter>
        <filter id="fine" x="-30%" y="-30%" width="160%" height="160%">
          <feGaussianBlur stdDeviation="4" />
        </filter>
        <linearGradient id="low" gradientUnits="userSpaceOnUse" x1="140" y1="600" x2="90" y2="960">
          <stop offset="0" stopColor="#5f5d5f" />
          <stop offset="0.500" stopColor="#747274" />
          <stop offset="1" stopColor="#9d9b9d" />
        </linearGradient>
        <clipPath id="left"><path d="M86 295H1374L1333 422L1266 597L1180 808L1111 969L1105 980H86Z" /></clipPath>
        <clipPath id="upper"><path d="M1340 295H1374L1381 312L1389 333L1402 347L1456 377L1611 464L1663 493L1675 504V980H1200Z" /></clipPath>
      </defs>
      <path d="M1180 808L1360 854L1540 914L1586 937L1632 964L1645 980H1080Z" fill="#989698" />
      <path d="M1272 590L1675 631V705L1655 718L1519 794L1477 816L1192 785Z" fill="#8b898b" />
      <path d="M1498 768L1675 682V705L1519 794L1477 816L1456 788Z" fill="#9b999c" />
      <path d="M1196 769L1393 784L1470 815L1192 785Z" fill="#030306" />
      <path d="M1393 786L1456 792L1475 814L1429 808Z" fill="#6d6b6d" />
      <g clipPath="url(#upper)">
        <path d="M1340 295H1374L1389 333L1675 504V575L1340 390Z" fill="#918f92" />
        <path d="M1350 384L1675 560V580L1340 395Z" fill="#555" filter="url(#fine)" />
      </g>
      <path d="M1347 388L1418 427L1586 512L1675 569V630L1272 590Z" fill="#000" />
      <g clipPath="url(#left)">
        <path d="M86 295H1400V980H86Z" fill="#858385" />
        <path d="M66 500L108 600L165 740L280 1000H66Z" fill="url(#low)" filter="url(#soft)" />
        <path d="M70 570L104 600L180 770L236 880L292 1000H256L150 770L70 640Z" fill="#5a585a" filter="url(#soft)" />
        <path d="M110 500L210 750L326 1000" fill="none" stroke="#8e8c8e" strokeWidth="20" filter="url(#soft)" />
        <path d="M640 322L484 337L408 345L354 368L333 419L340 460L346 512L370 610L431 774L518 990" fill="none" stroke="#5f5d5f" strokeWidth="7" filter="url(#fine)" />
        <path d="M1165 290H1262L1250 350L1100 760V480Z" fill="#7c7a7c" filter="url(#soft)" />
        <path d="M1185 290H1250L1240 345L1200 335Z" fill="#666466" filter="url(#soft)" />
        <path d="M1272 290L1257 370L1172 600L1100 780" fill="none" stroke="#a09ea0" strokeWidth="12" filter="url(#fine)" />
        <path d="M1150 290L1112 420" stroke="#989698" strokeWidth="24" filter="url(#soft)" />
        <path d="M1374 295L1266 597L1180 808L1105 980" fill="none" stroke="#5a585a" strokeWidth="14" filter="url(#fine)" />
      </g>
      <path d="M631 326L484 341L412 349L360 370L339 419L344 460L348 510L361 553L380 620L392 649L437 774L504 935L522 980" fill="none" stroke="#0a0828" strokeWidth="3" />
      <g fill="none" stroke="#16126a" strokeWidth="1.500">
        {wires.map((w, i) => (
          <polyline key={i} points={w} />
        ))}
      </g>
      <path d="M1374 296L1266 597L1180 808L1111 969" fill="none" stroke="#3a383c" strokeWidth="1.500" strokeDasharray="2 3" />
      <path d="M620 592L634 586V602Z" fill="#4fae4f" />
      <path d="M634 617L615 619L634 675" fill="#77797c" stroke="#6fc8e8" strokeWidth="2" />
      <path d="M616 620L634 634" stroke="#c58f6a" strokeWidth="2" />
      <g strokeWidth="2" fontFamily="Noto Sans" fontWeight="700">
        <path d="M130 937V912" stroke="#19c22c" />
        <path d="M130 937L116 931" stroke="#1616e0" />
        <path d="M130 938L110 941" stroke="#e02020" />
        <text x="124" y="910" fontSize="14" fill="#19c22c">Y</text>
        <text x="109" y="927" fontSize="14" fill="#1616e0">z</text>
        <text x="101" y="941" fontSize="14" fill="#e02020">x</text>
      </g>
    </svg>
  );
}

const field = "rounded bg-[#2b2b2b] pl-2 text-[#d8d8d8]";

function ViewPanel() {
  return (
    <section className="mt-[5px] mr-[7px] mb-2 flex min-w-0 flex-1 flex-col border-2 border-[#757577] bg-[#444446] px-[2px] pb-[3px]">
      <nav className="flex h-[29px] items-center gap-[26px] pl-2.5">
        {["View", "Shading", "Lighting", "Show", "Renderer", "Panels"].map((m) => (
          <button key={m}>{m}</button>
        ))}
      </nav>
      <div className="mb-[2px] flex h-9 items-center">
        <Tool name="sep" className="h-[27px] w-2" />
        <div className="ml-1.5 grid w-[225px] grid-cols-7">
          {["camera", "camLock", "camGear", "bookmark", "imagePlane", "panZoom", "grease"].map((n) => (
            <ToolButton key={n} name={n} size="size-[27px]" />
          ))}
        </div>
        <Tool name="sep" className="h-[27px] w-4" />
        <div className="ml-[3px] grid w-[224px] grid-cols-7">
          {["grid", "film", "gateRes", "gateMask", "chart", "safe", "titleSafe"].map((n) => (
            <ToolButton key={n} name={n} size="size-[27px]" />
          ))}
        </div>
        <Tool name="sep" className="h-[27px] w-5" />
        <div className="grid w-16 grid-cols-2">
          <ToolButton name="wire" size="size-[27px]" />
          <ToolButton name="shaded" size="size-[27px]" active />
        </div>
        <Tool name="xray" className="ml-[445px] size-[27px]" />
        <Tool name="sep" className="h-[27px] w-3" />
        <Tool name="aperture" className="ml-2 h-[27px] w-9" />
        <input aria-label="Exposure" defaultValue="0.00" className={`h-6 w-16 ${field}`} />
        <Tool name="contrast" className="h-[27px] w-[39px]" />
        <input aria-label="Gamma" defaultValue="1.00" className={`h-6 w-16 ${field}`} />
        <button className="mx-[5px] flex h-[30px] w-[31px] items-center justify-center bg-[#5083aa]">
          <span className="flex size-6 items-center justify-center rounded-full border-2 border-[#1d4b58] bg-[#3fa3b3] text-[10px] font-bold text-[#143f4a]">ON</span>
        </button>
        <Combo label="View transform" value="sRGB gamma" className="h-[29px] w-[276px]" bg="bg-[#585859]" />
      </div>
      <Viewport />
    </section>
  );
}

function LayerIcon({ kind }: { kind: "up" | "down" | "plus" | "ball" }) {
  return (
    <button aria-label={kind}>
      <svg viewBox="0 0 26 22" className="h-[22px] w-[26px] overflow-visible">
        <path d="M0 13L12 6L22 12L12 21Z" fill={GR} />
        {kind === "up" && <path d="M19 5L26 12H22V20H16V12H12Z" fill={TE} stroke={DK} />}
        {kind === "down" && <path d="M19 21L26 14H22V6H16V14H12Z" fill={TE} stroke={DK} />}
        {kind === "plus" && <path d="M20 0V13M13 6H26" stroke={TE} strokeWidth="4" />}
        {kind === "ball" && <circle cx="18" cy="6" r="6" fill={TE} />}
      </svg>
    </button>
  );
}

function ChannelBox() {
  const side = "flex justify-center rounded-r [writing-mode:vertical-rl] items-center w-6";
  return (
    <aside className="flex w-[472px] shrink-0 border-l-2 border-[#39383a] bg-[#444446]">
      <div className="mb-2.5 flex min-w-0 flex-1 flex-col px-2">
        <div className="flex h-[31px] items-end justify-end gap-3 pr-[2px]">
          <svg viewBox="0 0 24 24" className="size-6">
            <path d="M12 13V8M12 13L6 18M12 13L18 18" stroke={GR} strokeWidth="3" />
            <path d="M7 8H17L12 0Z" fill="#7aa04f" />
            <path d="M1 15V23H9Z" fill="#5b83d8" />
            <path d="M23 15V23H15Z" fill="#d85a55" />
          </svg>
          <svg viewBox="0 0 24 24" className="size-6">
            <path d="M5 20A9 9 0 1 1 20 14" fill="none" stroke={TE} strokeWidth="6" />
            <path d="M14 13H24L21 21H16Z" fill="#777" />
            <circle cx="13" cy="14" r="3" fill={TE} />
          </svg>
          <svg viewBox="0 0 24 24" className="size-6">
            <path d="M2 1V22H23" fill="none" stroke="#808080" strokeWidth="2" />
            <path d="M6 18L18 6" stroke={TE} strokeWidth="3" />
            <path d="M13 1H23V11Z" fill={TE} />
          </svg>
        </div>
        <nav className="mt-2.5 flex h-[30px] items-center gap-[25px] pl-3">
          {["Channels", "Edit", "Object", "Show"].map((m) => (
            <button key={m}>{m}</button>
          ))}
        </nav>
        <div className="mt-1.5 h-[107px] font-['Noto_Sans',sans-serif] leading-[27px] font-bold text-[#bdbdbd]">
          <p>pCubeShape2</p>
          <p>INPUTS</p>
          <p className="pl-4">polyCube2</p>
        </div>
        <div className="h-[217px] bg-[#2b2b2b]" />
        <span className={`mt-1 ml-[140px] h-[5px] w-[147px] ${grip}`} />
        <div className="mt-2.5 flex min-h-0 flex-1 flex-col border-2 border-[#39383a]">
          <div role="tablist" className="flex h-[30px] items-end gap-1 bg-[#39383a]">
            <ShelfTab label="Display" active className="w-[98px]" />
            <ShelfTab label="Anim" className="w-20" />
          </div>
          <nav className="flex h-9 items-center gap-6 pl-3">
            {["Layers", "Options", "Help"].map((m) => (
              <button key={m}>{m}</button>
            ))}
          </nav>
          <div className="flex h-[43px] items-start justify-end pt-1.5 pr-2.5">
            <LayerIcon kind="up" />
            <span className="w-[13px]" />
            <LayerIcon kind="down" />
            <span className="w-5" />
            <LayerIcon kind="plus" />
            <span className="w-[14px]" />
            <LayerIcon kind="ball" />
          </div>
          <div className="mx-[5px] min-h-0 flex-1 bg-[#2b2b2b]" />
          <div className="mx-[5px] mb-[3px] flex h-5 items-center bg-[#39383b] px-[5px]">
            <svg viewBox="0 0 9 14" className="h-3.5 w-[9px]"><path d="M9 0V14L0 7Z" fill={GR} /></svg>
            <div className="mx-2 flex-1">
              <div className="h-[17px] w-[69%] rounded-lg bg-[#5f5f60]" />
            </div>
            <svg viewBox="0 0 9 14" className="h-3.5 w-[9px]"><path d="M0 0V14L9 7Z" fill={GR} /></svg>
          </div>
        </div>
      </div>
      <div role="tablist" className="flex w-[26px] flex-col gap-1 bg-[#39383a]">
        <button role="tab" aria-selected="true" className={`${side} h-[268px] bg-[#444446] text-[#e0e0e0]`}>Channel Box / Layer Editor</button>
        <button role="tab" aria-selected="false" className={`${side} h-[184px] border border-[#303032] bg-[#3d3d3f] text-[#979798]`}>Modeling Toolkit</button>
        <button role="tab" aria-selected="false" className={`${side} h-[172px] border border-[#303032] bg-[#3d3d3f] text-[#979798]`}>Attribute Editor</button>
      </div>
    </aside>
  );
}

const playback: [string, React.ReactNode][] = [
  ["Go to start", <path key="p" d="M2 2H5V22H2ZM17 2V22L7 12ZM29 2V22L19 12Z" fill={GR} />],
  ["Step back", <path key="p" d="M5 2H8V22H5ZM25 2V22L11 12Z" fill={GR} />],
  ["Previous key", <g key="p"><path d="M4 1H9V23H4Z" fill={OR} /><path d="M26 2V22L11 12Z" fill={GR} /><path d="M6.500 -3V1M6.500 23V27" stroke={GR} strokeWidth="2" /></g>],
  ["Play backwards", <path key="p" d="M26 -1V25L4 12Z" fill={GR} />],
  ["Play forwards", <path key="p" d="M5 -1V25L27 12Z" fill={GR} />],
  ["Next key", <g key="p"><path d="M21 1H26V23H21Z" fill={OR} /><path d="M4 2V22L19 12Z" fill={GR} /><path d="M23.500 -3V1M23.500 23V27" stroke={GR} strokeWidth="2" /></g>],
  ["Step forward", <path key="p" d="M22 2H25V22H22ZM5 2V22L19 12Z" fill={GR} />],
  ["Go to end", <path key="p" d="M26 2H29V22H26ZM2 2V22L12 12ZM14 2V22L24 12Z" fill={GR} />],
];

function TimeSlider() {
  return (
    <div className="flex h-[70px] shrink-0 items-center border-t-2 border-[#39383a] bg-[#444446]">
      <span className={`h-14 w-2.5 ${grip}`} />
      <div className="relative ml-2.5 h-[54px] min-w-0 flex-1 overflow-x-clip bg-[#2b2b2b]">
        <div className="mr-[-45px] ml-[60px] flex h-full">
          {Array.from({ length: 24 }, (_, i) => (
            <div key={i} className="flex min-w-0 flex-1 flex-col">
              <span className="h-[21px] pl-1 text-[17px] leading-4 text-[#818181]">{(i + 1) * 5}</span>
              <span className="h-[26px] w-[3px] bg-[#7e7e7e]" />
            </div>
          ))}
        </div>
        <span className="absolute inset-y-0 left-2.5 flex w-2.5 items-center justify-center bg-[#5b5b5b] pt-3 text-[19px] text-white">1</span>
      </div>
      <div className="flex w-[498px] items-center pb-[7px] pl-3">
        <input aria-label="Current frame" defaultValue="1" className={`h-[30px] w-[149px] ${field}`} />
        <div className="ml-[11px] grid w-[312px] grid-cols-8 justify-items-center">
          {playback.map(([label, art]) => (
            <button key={label} aria-label={label}>
              <svg viewBox="0 0 31 24" className="h-6 w-[31px] overflow-visible">{art}</svg>
            </button>
          ))}
        </div>
      </div>
    </div>
  );
}

function RangeSlider() {
  const plain = "h-[43px] rounded-md border-2 border-[#4f4f51] bg-[#414143] pl-1.5 text-left text-[#dadada]";
  return (
    <div className="flex h-[63px] shrink-0 items-center border-t-2 border-[#39383a] bg-[#444446]">
      <span className={`h-12 w-2.5 ${grip}`} />
      <input aria-label="Animation start" defaultValue="1" className={`ml-[11px] h-[42px] w-[149px] ${field}`} />
      <input aria-label="Range start" defaultValue="1" className={`ml-3.5 h-[42px] w-[149px] ${field}`} />
      <div className="ml-3 h-[42px] min-w-0 flex-1 rounded bg-[#38383a] p-1">
        <div className="flex h-full items-center gap-[6px] rounded-md bg-[#5e5e5f] pl-1">
          <span className="size-6 rounded-md bg-[#959596]" />
          <span>1</span>
        </div>
      </div>
      <input aria-label="Animation end" defaultValue="200" className={`h-[42px] w-[148px] ${field}`} />
      <Tool name="sep" className="h-[34px] w-5" />
      <Tool name="caretOutline" className="h-[28px] w-11" />
      <button className={`w-[172px] ${plain}`}>No Character Set</button>
      <Tool name="caretOutline" className="h-[28px] w-[47px]" />
      <button className={`w-[171px] ${plain}`}>No Anim Layer</button>
      <Tool name="sep" className="h-[34px] w-[39px]" />
      <Combo label="Frame rate" value="24 fps" className="h-8 w-[160px]" />
      <svg viewBox="0 0 28 22" className="ml-6 h-[22px] w-7" role="img" aria-label="Loop">
        <path d="M2 13Q0 5 8 5H19M26 9Q28 17 20 17H9" fill="none" stroke={GR} strokeWidth="4" />
        <path d="M18 0L26 5L18 11ZM10 11L2 17L10 22Z" fill={GR} />
      </svg>
      <button aria-label="Cached playback" className="ml-4 border-2 border-[#36c04a] bg-[#5083aa]">
        <svg viewBox="0 0 36 36" className="size-9">
          <path d="M3 7H31V30H3Z" fill={OR} stroke="#26384a" />
          <path d="M4 10H31M4 27H31" stroke="#26384a" strokeWidth="2" strokeDasharray="3 2" />
          <path d="M6 14H29V23H6Z" fill={GR} stroke="#26384a" />
          <path d="M14 14V23M21 14V23" stroke="#26384a" />
          <path d="M22 2L33 10L22 18Z" fill={GR} stroke="#26384a" />
        </svg>
      </button>
      <Tool name="sep" className="h-[34px] w-[33px]" />
      <svg viewBox="0 0 28 28" className="ml-[7px] size-7" role="img" aria-label="Auto key">
        <path d="M5 8Q14 -4 23 7M23 20Q14 32 4 20M1 14H9M19 14H27" fill="none" stroke={GR} strokeWidth="2" />
        <path d="M1 2V11H9ZM27 26V17H19Z" fill={GR} />
        <path d="M14 7V21" stroke="#d97c48" strokeWidth="5" />
      </svg>
      <svg viewBox="0 0 32 32" className="mr-[18px] ml-[18px] size-8" role="img" aria-label="Preferences">
        <circle cx="9" cy="9" r="5" fill="none" stroke={GR} strokeWidth="2" />
        <circle cx="9" cy="9" r="7" fill="none" stroke={GR} strokeWidth="2" strokeDasharray="3 3" />
        <circle cx="26" cy="7" r="3" fill="#e07f42" />
        <path d="M13 14L20 12L25 15L30 13M22 13L18 21L25 24L24 31M18 21L15 26L9 25" fill="none" stroke="#e07f42" strokeWidth="4" />
      </svg>
    </div>
  );
}

function CommandLine() {
  return (
    <div className="relative flex h-[56px] shrink-0 items-center border-t-2 border-[#39383a] bg-[#444446]">
      <span className={`h-11 w-2.5 ${grip}`} />
      <label htmlFor="mel" className="w-[88px] pl-7 text-[#dedede]">MEL</label>
      <input id="mel" className="h-[38px] w-[725px] rounded bg-[#2b2b2b] px-2" />
      <input aria-label="Command result" readOnly className="ml-3.5 h-[40px] min-w-0 flex-1 bg-[#2b2b2b] px-2" />
      <svg viewBox="0 0 31 31" className="mr-[13px] ml-[11px] size-[31px]" role="img" aria-label="Script editor">
        <path d="M0 0H31V31H0Z" fill={GR} />
        <path d="M0 6H31" stroke={DK} strokeWidth="2" />
        <path d="M3 3H11" stroke={DK} strokeWidth="2" strokeDasharray="2 1" />
        <path d="M10 11Q7 11 7 14Q7 18 5 18Q7 19 7 22Q7 26 10 26M21 11Q24 11 24 14Q24 18 26 18Q24 19 24 22Q24 26 21 26" fill="none" stroke={DK} strokeWidth="2" />
        <path d="M14 13H18V17H14ZM14 20H18L15 26Z" fill={DK} />
      </svg>
      <span className="absolute right-[44px] -bottom-[2px] flex size-[76px] items-center justify-center rounded-full bg-[#8a8a8a]/45">
        <svg viewBox="0 0 44 40" className="ml-1 h-10 w-11" aria-hidden="true">
          <path d="M2 6V34L26 20ZM11 2V38L42 20Z" fill="none" stroke="#2f2f30" strokeWidth="3" />
        </svg>
      </span>
    </div>
  );
}

type Row = { head: string } | { rule: true } | { icon: string; label: string; keys?: string; box?: boolean; last?: boolean };
const rows: Row[] = [
  { head: "Components" },
  { icon: "divisions", label: "Add Divisions", box: true },
  { icon: "bevelEdge", label: "Bevel", keys: "Ctrl+B", box: true },
  { icon: "bridge", label: "Bridge", box: true },
  { icon: "circularize", label: "Circularize", box: true },
  { icon: "collapseDim", label: "Collapse" },
  { icon: "connect", label: "Connect", box: true },
  { icon: "detach", label: "Detach" },
  { icon: "extrude", label: "Extrude", keys: "Ctrl+E", box: true },
  { icon: "merge", label: "Merge", box: true },
  { icon: "target", label: "Merge to Center" },
  { icon: "transform", label: "Transform", box: true },
  { rule: true },
  { icon: "flip", label: "Flip" },
  { icon: "symmetrize", label: "Symmetrize" },
  { head: "Vertex" },
  { icon: "average", label: "Average Vertices", box: true },
  { icon: "chamfer", label: "Chamfer Vertices", box: true },
  { icon: "reorder", label: "Reorder Vertices" },
  { head: "Edge" },
  { icon: "deleteEdge", label: "Delete Edge/Vertex", keys: "Ctrl+Del" },
  { icon: "edgeFlow", label: "Edit Edge Flow", box: true },
  { icon: "flipTri", label: "Flip Triangle Edge" },
  { icon: "spinBack", label: "Spin Edge Backward", keys: "Ctrl+Alt+Left" },
  { icon: "spinFwd", label: "Spin Edge Forward", keys: "Ctrl+Alt+Right" },
  { head: "Face" },
  { icon: "invisible", label: "Assign Invisible Faces", box: true },
  { icon: "duplicate", label: "Duplicate", box: true },
  { icon: "extract", label: "Extract", box: true },
  { icon: "poke", label: "Poke", box: true },
  { icon: "wedge", label: "Wedge", box: true },
  { head: "Curve" },
  { icon: "project", label: "Project Curve on Mesh", box: true },
  { icon: "splitMesh", label: "Split Mesh with Projected Curve", box: true, last: true },
];

function EditMeshMenu() {
  return (
    <div className="absolute top-10 left-[631px] z-20 w-[479px] border border-[#2e2e30] bg-[linear-gradient(to_right,#424043_34px,#525254_34px)] text-[#dedede] shadow-[4px_5px_8px_rgba(0,0,0,0.55)]">
      <div className="flex h-[26px] items-center border-b-2 border-[#38383a] bg-[#444446]">
        <span className="h-2.5 w-full bg-[radial-gradient(#77777a_1px,transparent_1px)] bg-[length:5px_5px]" />
      </div>
      <div className="pt-px">
        {rows.map((r, i) => {
          if ("head" in r)
            return (
              <div key={i} className="flex h-[25px] items-center gap-[17px] pb-[2px] pl-10 text-[#9b9b9c]">
                {r.head}
                <span className="h-[2px] flex-1 bg-[#6f6f71]" />
              </div>
            );
          if ("rule" in r) return <div key={i} className="ml-[62px] h-[7px] border-t-2 border-[#6f6f71]" />;
          const on = r.label === "Bevel";
          return (
            <div key={i} className={`relative flex items-center ${r.last ? "h-[31px]" : "h-[34px]"}`}>
              <span className="flex w-[34px] justify-center">
                <Shape name={r.icon} className="size-[22px]" />
              </span>
              <button className={`flex h-[30px] w-[403px] items-center justify-between pr-1.5 pl-[26px] text-left ${on ? "bg-[#4f82aa]" : ""}`}>
                <span>{r.label}</span>
                <span>{r.keys}</span>
              </button>
              {r.box && (
                <input type="checkbox" aria-label={`${r.label} options`} className="ml-3 size-[19px] appearance-none border-2 border-[#b9b9ba]" />
              )}
              {on && <span className="pointer-events-none absolute -top-[3px] -bottom-[5px] left-[5px] w-[471px] rounded border-[6px] border-[#ff0000]" />}
            </div>
          );
        })}
      </div>
      <span className="absolute top-[78px] -left-[6px] size-2 rounded-full bg-[#ff0000]" />
      <svg viewBox="0 0 20 32" className="absolute top-[104px] left-[173px] h-8 w-5" aria-hidden="true">
        <path d="M1 1V26L6 21L10 30L14 28L10 19H17Z" fill="#fff" stroke="#111" strokeWidth="1.500" />
      </svg>
    </div>
  );
}

export default function App() {
  return (
    <div className="relative flex min-h-screen flex-col overflow-hidden bg-[#39383a] font-['Open_Sans',sans-serif] text-[19px] leading-7 text-[#c9c9c9]">
      <div className="relative h-[9px] shrink-0 bg-[#0d0f13]">
        <span className="absolute top-[3px] right-[23px] h-[2px] w-[17px] bg-white" />
        <span className="absolute top-[9px] right-[2px] z-10 h-[9px] w-14 bg-[#2c2c2e]/70" />
      </div>
      <MenuBar />
      <StatusLine />
      <div className="my-[1px] h-1 shrink-0 border-t-2 border-[#353436] bg-[#444446]" />
      <Shelf />
      <div className="flex min-h-0 flex-1 border-t-[3px] border-[#39383a] bg-[#444446]">
        <ToolBox />
        <div className="w-[7px] shrink-0 border-l-[3px] border-[#39383a]" />
        <ViewPanel />
        <ChannelBox />
      </div>
      <TimeSlider />
      <RangeSlider />
      <CommandLine />
      <div className="h-[11px] shrink-0 bg-[#39383a] px-[7px] pt-[5px]">
        <div className="flex h-1 bg-[#636364]">
          <span className="w-[57%] bg-[#0a80bb]" />
          <span className="w-[12%] bg-[#9a9a9b]" />
        </div>
      </div>
      <EditMeshMenu />
    </div>
  );
}
